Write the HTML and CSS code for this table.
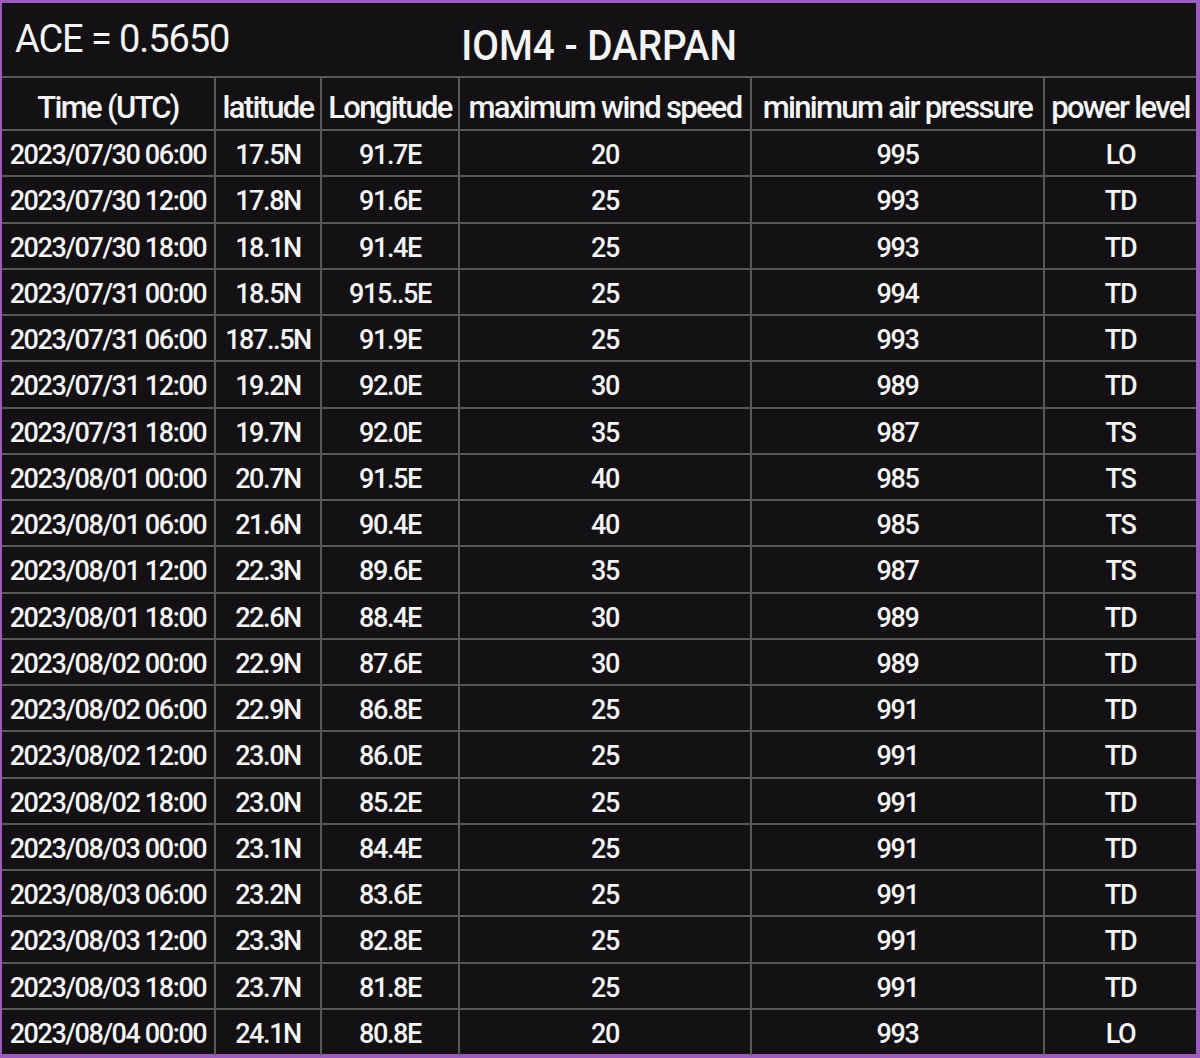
FILE: index.html
```html
<!DOCTYPE html>
<html>
<head>
<meta charset="utf-8">
<link rel="stylesheet" href="styles.css">
</head>
<body>
<div class="frame">
  <div class="titlebar">
    <div class="ace">ACE = 0.5650</div>
    <div class="name">IOM4 - DARPAN</div>
    <div></div>
  </div>
  <table class="track">
    <colgroup>
      <col class="c1"><col class="c2"><col class="c3"><col class="c4"><col class="c5"><col class="c6">
    </colgroup>
    <thead>
      <tr><th>Time (UTC)</th><th>latitude</th><th>Longitude</th><th>maximum wind speed</th><th>minimum air pressure</th><th>power level</th></tr>
    </thead>
    <tbody>
      <tr><td>2023/07/30 06:00</td><td>17.5N</td><td>91.7E</td><td>20</td><td>995</td><td>LO</td></tr>
      <tr><td>2023/07/30 12:00</td><td>17.8N</td><td>91.6E</td><td>25</td><td>993</td><td>TD</td></tr>
      <tr><td>2023/07/30 18:00</td><td>18.1N</td><td>91.4E</td><td>25</td><td>993</td><td>TD</td></tr>
      <tr><td>2023/07/31 00:00</td><td>18.5N</td><td>915..5E</td><td>25</td><td>994</td><td>TD</td></tr>
      <tr><td>2023/07/31 06:00</td><td>187..5N</td><td>91.9E</td><td>25</td><td>993</td><td>TD</td></tr>
      <tr><td>2023/07/31 12:00</td><td>19.2N</td><td>92.0E</td><td>30</td><td>989</td><td>TD</td></tr>
      <tr><td>2023/07/31 18:00</td><td>19.7N</td><td>92.0E</td><td>35</td><td>987</td><td>TS</td></tr>
      <tr><td>2023/08/01 00:00</td><td>20.7N</td><td>91.5E</td><td>40</td><td>985</td><td>TS</td></tr>
      <tr><td>2023/08/01 06:00</td><td>21.6N</td><td>90.4E</td><td>40</td><td>985</td><td>TS</td></tr>
      <tr><td>2023/08/01 12:00</td><td>22.3N</td><td>89.6E</td><td>35</td><td>987</td><td>TS</td></tr>
      <tr><td>2023/08/01 18:00</td><td>22.6N</td><td>88.4E</td><td>30</td><td>989</td><td>TD</td></tr>
      <tr><td>2023/08/02 00:00</td><td>22.9N</td><td>87.6E</td><td>30</td><td>989</td><td>TD</td></tr>
      <tr><td>2023/08/02 06:00</td><td>22.9N</td><td>86.8E</td><td>25</td><td>991</td><td>TD</td></tr>
      <tr><td>2023/08/02 12:00</td><td>23.0N</td><td>86.0E</td><td>25</td><td>991</td><td>TD</td></tr>
      <tr><td>2023/08/02 18:00</td><td>23.0N</td><td>85.2E</td><td>25</td><td>991</td><td>TD</td></tr>
      <tr><td>2023/08/03 00:00</td><td>23.1N</td><td>84.4E</td><td>25</td><td>991</td><td>TD</td></tr>
      <tr><td>2023/08/03 06:00</td><td>23.2N</td><td>83.6E</td><td>25</td><td>991</td><td>TD</td></tr>
      <tr><td>2023/08/03 12:00</td><td>23.3N</td><td>82.8E</td><td>25</td><td>991</td><td>TD</td></tr>
      <tr><td>2023/08/03 18:00</td><td>23.7N</td><td>81.8E</td><td>25</td><td>991</td><td>TD</td></tr>
      <tr><td>2023/08/04 00:00</td><td>24.1N</td><td>80.8E</td><td>20</td><td>993</td><td>LO</td></tr>
    </tbody>
  </table>
</div>
</body>
</html>
```
FILE: styles.css
```css
html, body {
  margin: 0;
  padding: 0;
  background: #9c5cbf;
}
body {
  font-family: Roboto, "Liberation Sans", sans-serif;
  color: #f4f4f4;
  font-weight: 500;
}
.frame {
  width: 1194px;
  height: 1051px;
  margin: 0;
  border-top: 3px solid #9c5cbf;
  border-left: 2px solid #9c5cbf;
  border-right: 4px solid #9c5cbf;
  border-bottom: 4px solid #9c5cbf;
  background: #131113;
  display: flex;
  flex-direction: column;
}
.titlebar {
  height: 75px;
  flex: none;
  display: grid;
  grid-template-columns: 1fr auto 1fr;
  border-bottom: 2px solid #585858;
  box-sizing: border-box;
}
.ace {
  font-size: 38px;
  font-weight: 400;
  letter-spacing: -1.1px;
  padding: 14px 0 0 13px;
  line-height: 44px;
}
.name {
  font-size: 43px;
  font-weight: 500;
  letter-spacing: 0px;
  padding-top: 18px;
  line-height: 48px;
  transform: scaleX(0.9);
}
.track {
  width: 1194px;
  border-collapse: collapse;
  table-layout: fixed;
}
.c1 { width: 213px; }
.c2 { width: 106px; }
.c3 { width: 138px; }
.c4 { width: 292px; }
.c5 { width: 293px; }
.c6 { width: 152px; }
.track th, .track td {
  border: 2px solid #585858;
  text-align: center;
  padding: 0;
  white-space: nowrap;
  overflow: visible;
}
.track th:first-child, .track td:first-child { border-left: none; }
.track th:last-child, .track td:last-child { border-right: none; }
.track tr:last-child td { border-bottom: none; }
.track thead tr:first-child th { border-top: none; }
.track th {
  height: 52px;
  font-size: 31px;
  font-weight: 500;
  letter-spacing: -1.7px;
  padding-top: 7px;
  box-sizing: border-box;
}
.track td {
  height: 46.25px;
  font-size: 27px;
  letter-spacing: -1.4px;
  padding-top: 4px;
  box-sizing: border-box;
}
```
